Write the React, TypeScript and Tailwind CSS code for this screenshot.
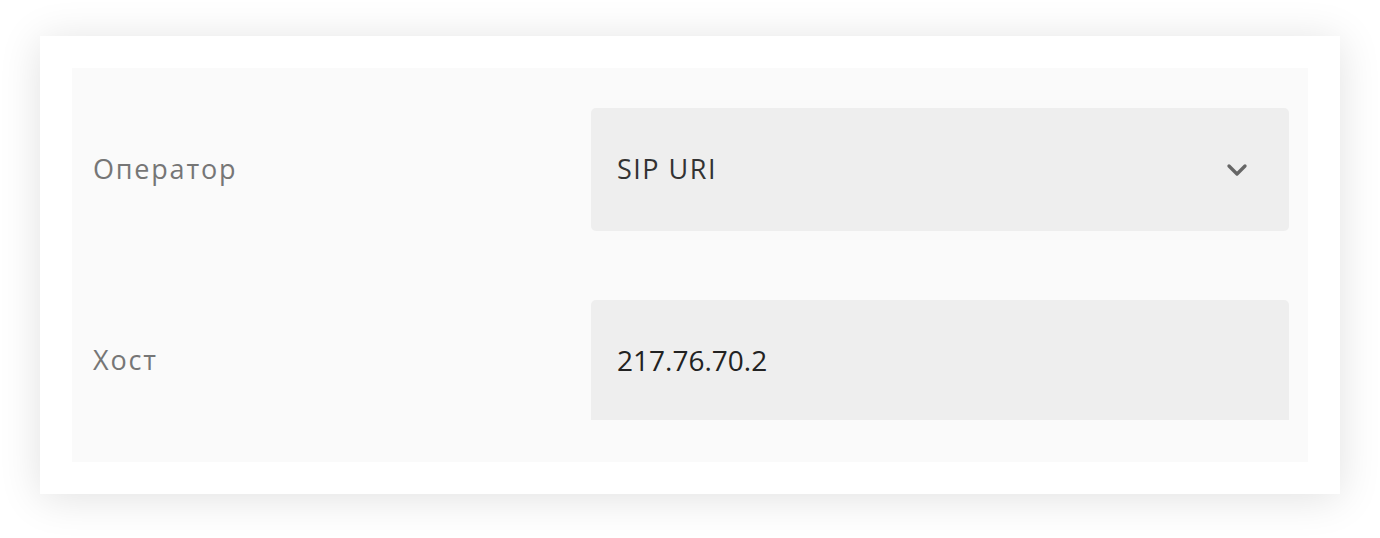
import { ChevronDown } from "lucide-react";

const Row = ({ label, children }: { label: string; children: React.ReactNode }) => (
  <div className="grid grid-cols-[498px_1fr] items-center">
    <div className="text-[27px] tracking-[1.8px] text-[#767676]">{label}</div>
    {children}
  </div>
);

export default function App() {
  return (
    <div className="h-[538px] w-[1380px] bg-white pl-10 pt-9 font-['Open_Sans',sans-serif]">
      <div className="h-[458px] w-[1300px] bg-white p-8 shadow-[0_4px_40px_rgba(0,0,0,0.12)]">
        <div className="flex h-[394px] flex-col gap-[69px] bg-[#fafafa] pb-[42px] pl-[21px] pr-[19px] pt-10">
          <Row label="Оператор">
            <div className="flex h-[123px] items-center justify-between rounded-[5px] bg-[#eeeeee] pl-[26px] pr-9">
              <span className="text-[27px] font-medium tracking-[1.5px] text-[#333]">SIP URI</span>
              <ChevronDown size={32} strokeWidth={2.5} className="text-[#666]" />
            </div>
          </Row>
          <Row label="Хост">
            <div className="flex h-[120px] items-center rounded-t-[5px] bg-[#eeeeee] pl-[26px]">
              <span className="text-[28px] text-[#222]">217.76.70.2</span>
            </div>
          </Row>
        </div>
      </div>
    </div>
  );
}
